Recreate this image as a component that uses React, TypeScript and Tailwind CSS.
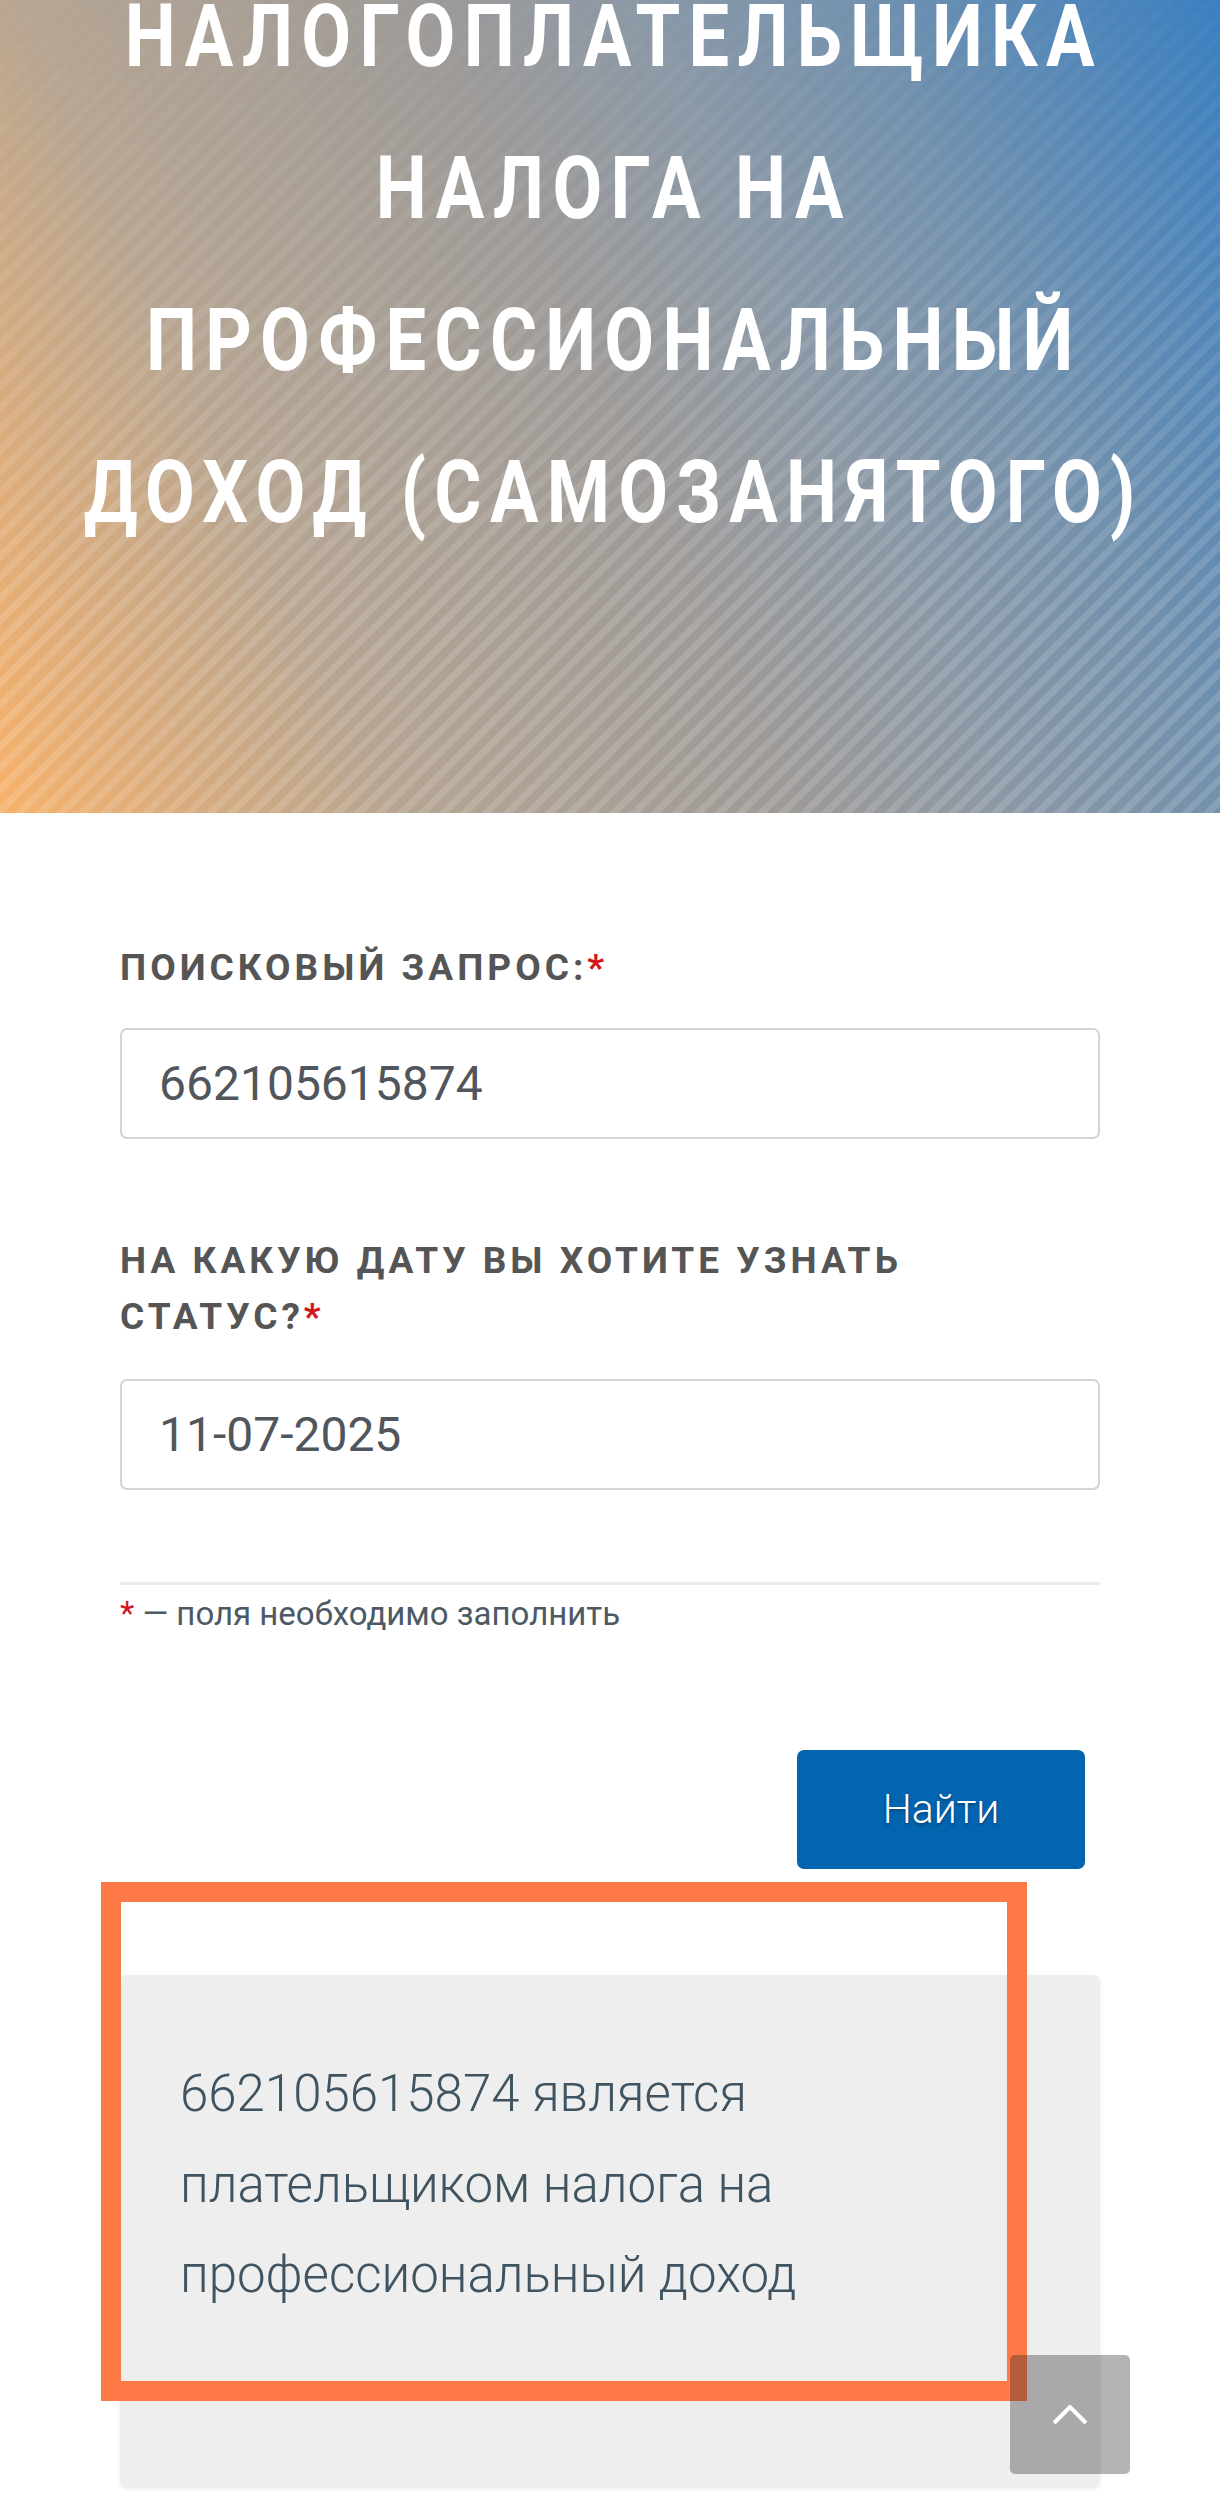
const titleLines = [
  'Налогоплательщика',
  'налога на',
  'профессиональный',
  'доход (самозанятого)',
]

function Label({ children }: { children: React.ReactNode }) {
  return (
    <label className="block text-[37px] leading-[56px] font-bold uppercase tracking-[4px] text-[#555555]">
      {children}
      <span className="text-[#d0161b]">*</span>
    </label>
  )
}

function Field({ value }: { value: string }) {
  return (
    <input
      readOnly
      value={value}
      className="block w-full h-[111px] rounded-[7px] border-2 border-[#d1d4d8] bg-white pl-[37px] text-[48px] text-[#51565c] outline-none"
    />
  )
}

export default function App() {
  return (
    <div className="relative min-h-[2502px] bg-white font-['Roboto','Liberation_Sans',sans-serif]">
      {/* Hero */}
      <section className="relative flex h-[813px] flex-col items-center overflow-hidden bg-[linear-gradient(65deg,#f8b26b_0%,#b6a592_25%,#9d9a98_50%,#8a98a6_64%,#7391ad_77%,#3a7fc1_100%)]">
        <div className="absolute inset-0 bg-[repeating-linear-gradient(135deg,rgba(255,255,255,0.14)_0px,rgba(255,255,255,0.14)_7px,transparent_7px,transparent_15px)] [mask-image:linear-gradient(to_bottom,rgba(0,0,0,0.15),black_75%)]" />
        <h1 className="relative -mt-[40px] w-max pl-[10px] text-center text-[87px] leading-[152px] font-bold uppercase tracking-[10px] text-white scale-x-[0.83]">
          {titleLines.map((line) => (
            <span key={line} className="block whitespace-nowrap">
              {line}
            </span>
          ))}
        </h1>
      </section>

      {/* Form */}
      <main className="px-[120px] pt-[127px] pb-[15px]">
        <Label>Поисковый запрос:</Label>
        <div className="mt-[32px]">
          <Field value="662105615874" />
        </div>

        <div className="mt-[94px]">
          <Label>
            На какую дату вы хотите узнать
            <br />
            статус?
          </Label>
        </div>
        <div className="mt-[34px]">
          <Field value="11-07-2025" />
        </div>

        <div className="mt-[92px] h-[3px] bg-[#ececec]" />
        <p className="mt-[5px] text-[33px] leading-[48px] text-[#4d5a65]">
          <span className="text-[#d0161b]">*</span> — поля необходимо заполнить
        </p>

        <div className="mt-[112px] flex justify-end pr-[15px]">
          <button className="w-[288px] h-[119px] rounded-[7px] bg-[#0365b0] text-[41px] font-light text-white [text-shadow:0_2px_3px_rgba(0,0,0,0.35)]">
            Найти
          </button>
        </div>

        <div className="mt-[106px] h-[512px] rounded-[7px] bg-[#eeeeee] pl-[60px] pt-[74px] shadow-[0_2px_4px_rgba(0,0,0,0.08)]">
          <p className="text-[51px] leading-[90.5px] font-light text-[#3f5361]">
            662105615874 является
            <br />
            плательщиком налога на
            <br />
            профессиональный доход
          </p>
        </div>
      </main>

      {/* highlight frame */}
      <div className="pointer-events-none absolute left-[101px] top-[1882px] w-[926px] h-[519px] border-[20px] border-[#fd7a47]" />

      {/* scroll to top */}
      <button className="absolute right-[90px] bottom-[28px] flex w-[120px] h-[119px] items-center justify-center rounded-[5px] bg-[rgba(40,40,40,0.35)]">
        <svg width="36" height="20" viewBox="0 0 36 20" fill="none">
          <path d="M2 18 L18 2 L34 18" stroke="white" strokeWidth="4" />
        </svg>
      </button>
    </div>
  )
}
